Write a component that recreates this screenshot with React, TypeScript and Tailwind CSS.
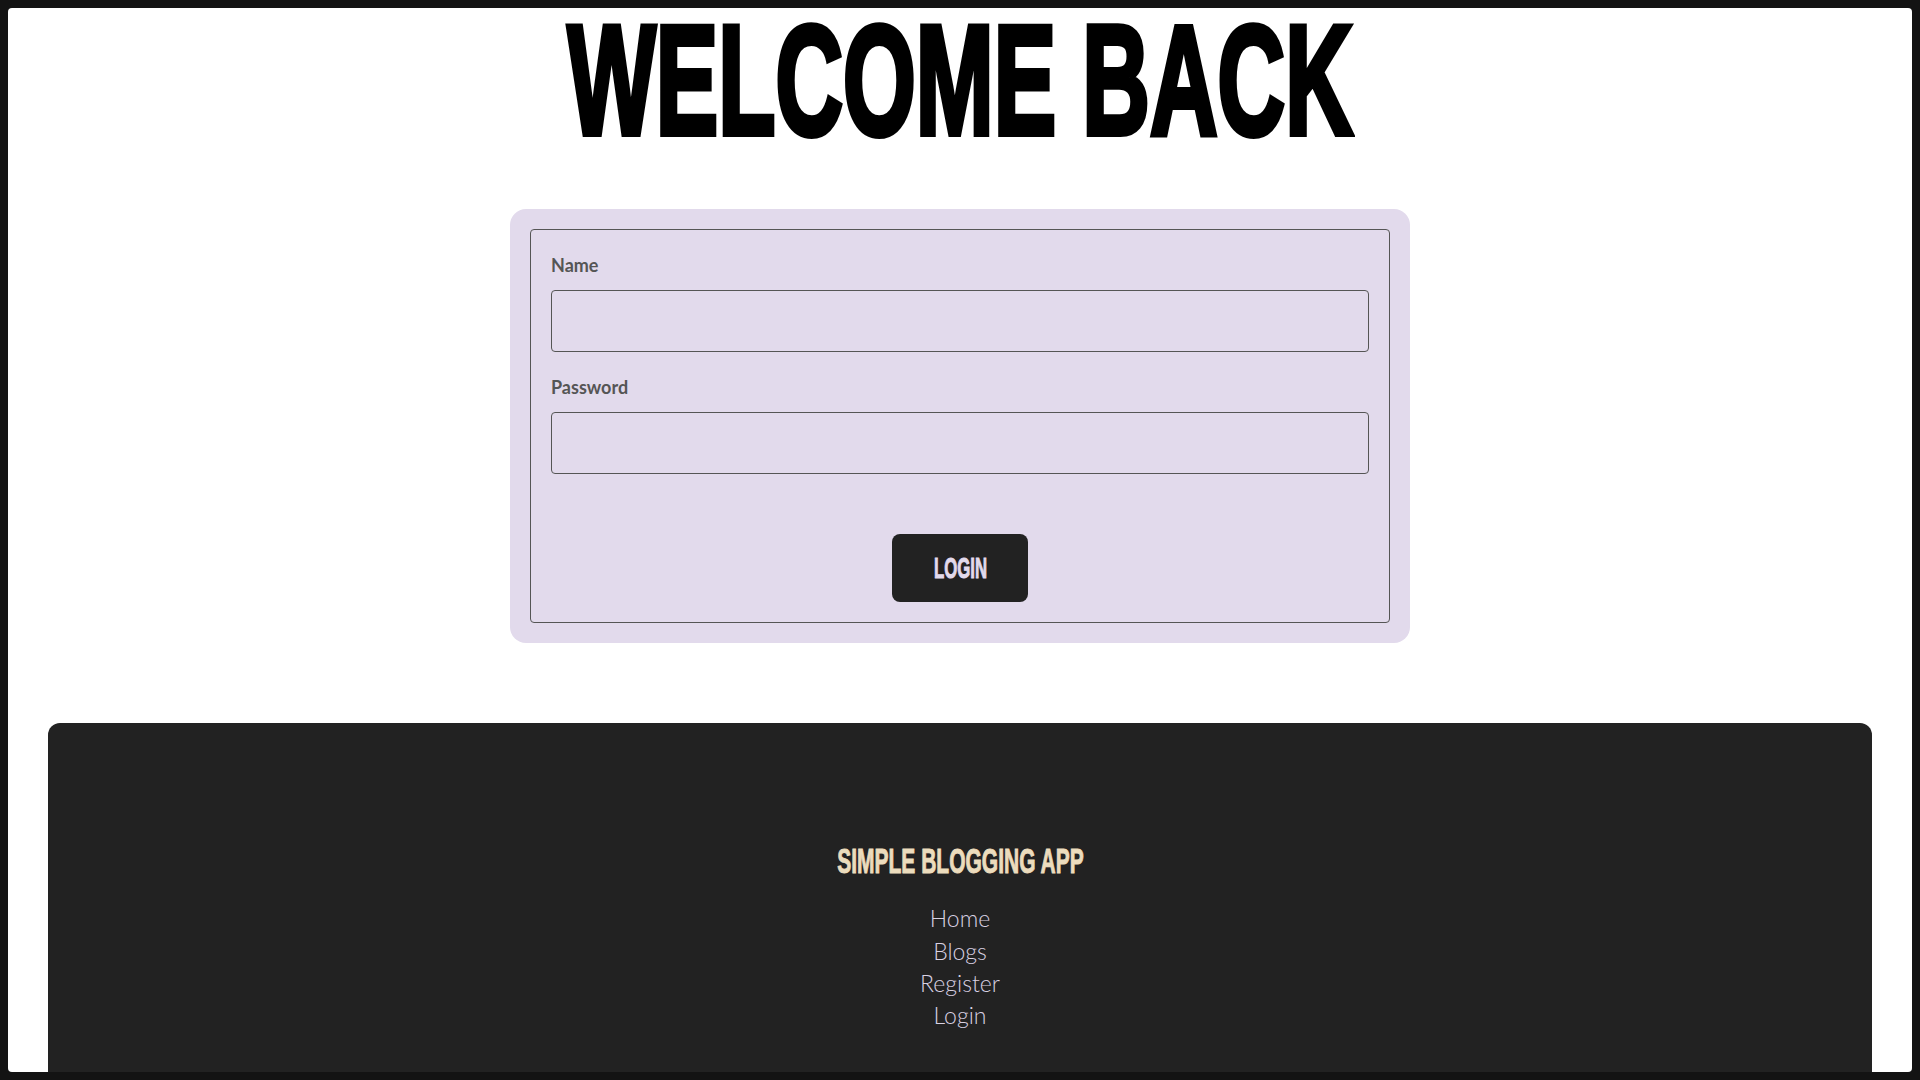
import { useState } from 'react';

const display = "font-['Liberation_Sans',Arial,sans-serif] font-bold uppercase";
const body = "font-['Lato','Open_Sans',sans-serif]";

function Field({ label, type, first }: { label: string; type: string; first?: boolean }) {
  const [value, setValue] = useState('');
  return (
    <div className={first ? '' : 'mt-5'}>
      <label className={`${body} block text-[18px] leading-[31px] font-bold text-[#555555]`}>{label}</label>
      <input
        type={type}
        value={value}
        onChange={(e) => setValue(e.target.value)}
        className="mt-[9px] block h-[62px] w-full rounded border border-[#555555] bg-transparent px-3 outline-none"
      />
    </div>
  );
}

export default function App() {
  const links = ['Home', 'Blogs', 'Register', 'Login'];

  return (
    <div className="h-screen bg-[#131313] p-2">
      <div className="h-full overflow-hidden rounded bg-white">
        {/* Heading */}
        <h1 className={`${display} text-center text-[155px] leading-[0.945] text-black`}>
          <span className="inline-block scale-x-[0.604] [-webkit-text-stroke:6px_black]">Welcome Back</span>
        </h1>

        {/* Login card */}
        <form
          onSubmit={(e) => e.preventDefault()}
          className="mx-auto mt-[55px] w-[900px] rounded-2xl bg-[#e2daec] p-5"
        >
          <fieldset className="rounded border border-[#555555] p-5">
            <Field label="Name" type="text" first />
            <Field label="Password" type="password" />
            <div className="mt-[60px] flex justify-center">
              <button
                type="submit"
                className="flex h-[68px] w-[136px] items-center justify-center rounded-lg bg-[#222222]"
              >
                <span className={`${display} inline-block scale-x-[0.56] text-[30px] leading-none text-[#e2daec] [-webkit-text-stroke:1px_#e2daec]`}>
                  Login
                </span>
              </button>
            </div>
          </fieldset>
        </form>

        {/* Footer */}
        <footer className="mx-10 mt-20 rounded-xl bg-[#222222] pt-[117px] pb-24 text-center">
          <h2 className={`${display} text-[35px] leading-[1.2] text-[#ecdcbd]`}>
            <span className="inline-block scale-x-[0.6] [-webkit-text-stroke:1px_#ecdcbd]">Simple Blogging App</span>
          </h2>
          <ul className={`${body} mt-5 text-[23px] leading-[32.3px] font-light text-[#d9d1e3]`}>
            {links.map((l) => (
              <li key={l}>
                <a href="#">{l}</a>
              </li>
            ))}
          </ul>
        </footer>
      </div>
    </div>
  );
}
